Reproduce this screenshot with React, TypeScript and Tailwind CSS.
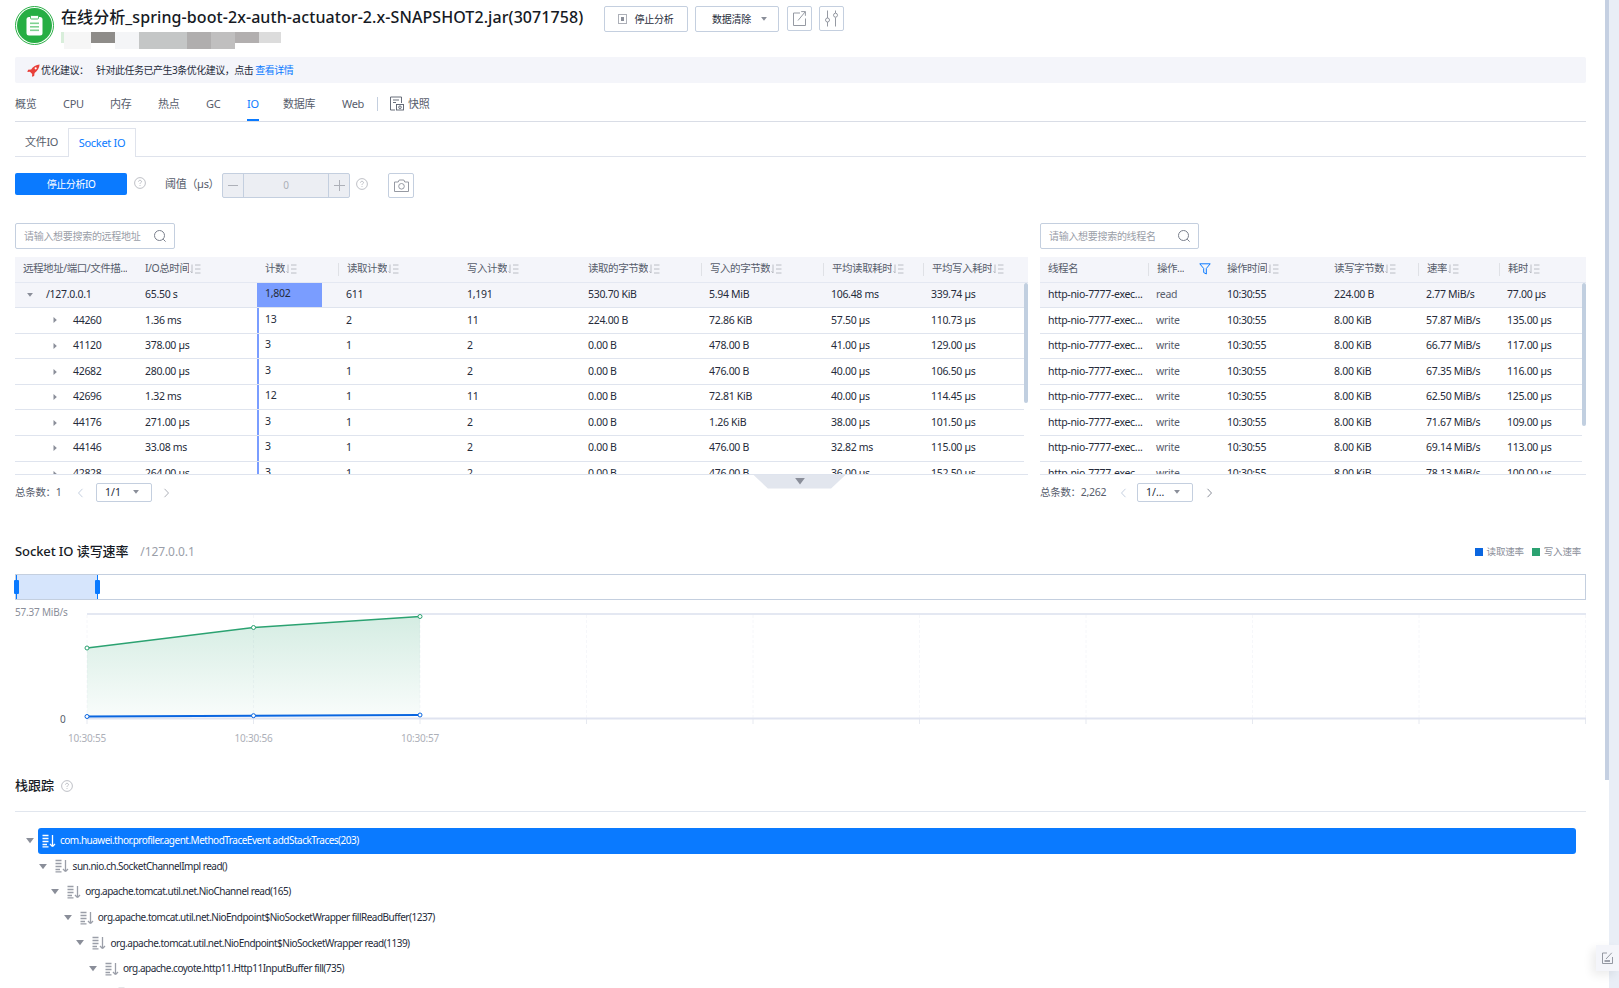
import React from "react";

const FONT = 'font-["Noto_Sans","Noto_Sans_CJK_SC",sans-serif]';

const Sort = () => (
  <svg width="11" height="10" viewBox="0 0 11 10" fill="none" stroke="#adb0b8" strokeWidth="0.8" className="ml-[1px] shrink-0">
    <path d="M2 0.5V9M2 9L0.5 7.2" />
    <path d="M5 1H10.5M5 5H10.5M5 9H10.5" />
  </svg>
);

const Help = ({ className = "" }: { className?: string }) => (
  <svg width="12" height="12" viewBox="0 0 12 12" fill="none" stroke="#adb0b8" strokeWidth="0.8" className={"shrink-0 " + className}>
    <circle cx="6" cy="6" r="5.4" />
    <path d="M4.5 4.7C4.5 3.8 5.2 3.3 6 3.3C6.8 3.3 7.5 3.8 7.5 4.6C7.5 5.5 6 5.7 6 6.9" />
    <path d="M6 8V8.9" />
  </svg>
);

const Search = () => (
  <svg width="14" height="14" viewBox="0 0 14 14" fill="none" stroke="#7a7f8c" strokeWidth="1" className="shrink-0">
    <circle cx="6.5" cy="6.5" r="5" />
    <path d="M10.2 10.2L12.6 12.6" />
  </svg>
);

const Chevron = ({ dir, color }: { dir: "l" | "r"; color: string }) => (
  <svg width="7" height="10" viewBox="0 0 7 10" fill="none" stroke={color} strokeWidth="1" className="shrink-0">
    <path d={dir === "l" ? "M5.5 0.8L1.5 5L5.5 9.2" : "M1.5 0.8L5.5 5L1.5 9.2"} />
  </svg>
);

const Caret = ({ color = "#8a8e99", size = 7 }: { color?: string; size?: number }) => (
  <svg width={size} height={size * 0.7} viewBox="0 0 7 5" className="shrink-0">
    <path d="M0 0H7L3.5 4.6Z" fill={color} />
  </svg>
);

const StackIcon = ({ color }: { color: string }) => (
  <svg width="14" height="14" viewBox="0 0 14 14" fill="none" stroke={color} strokeWidth="1.3" className="shrink-0">
    <path d="M0.5 1.5H6.5M0.5 4.5H6.5M0.5 7.5H6.5M0.5 10.5H5M0.5 12.8H6.5" />
    <path d="M10.5 1V12.6M10.5 12.6L8 10M10.5 12.6L13 10" />
  </svg>
);

const Logo = () => (
  <div className="flex h-[39px] w-[39px] shrink-0 items-center justify-center rounded-full border border-[#2aae46] bg-white">
    <div className="flex h-[35px] w-[35px] items-center justify-center rounded-full bg-[#27ae44]">
      <svg width="17" height="21" viewBox="0 0 17 21">
        <rect x="0.5" y="2" width="16" height="18.5" rx="2.5" fill="#fff" />
        <rect x="4.5" y="0.5" width="8" height="3.5" rx="1" fill="#fff" stroke="#27ae44" strokeWidth="0.8" />
        <rect x="4" y="7.5" width="9" height="1.6" fill="#7fd292" />
        <rect x="4" y="11" width="9" height="1.6" fill="#7fd292" />
        <rect x="4" y="14.5" width="9" height="1.6" fill="#7fd292" />
      </svg>
    </div>
  </div>
);

const leftCols = [122, 120, 81, 121, 121, 121, 122, 100, 105];
const leftHead = ["远程地址/端口/文件描...", "I/O总时间", "计数", "读取计数", "写入计数", "读取的字节数", "写入的字节数", "平均读取耗时", "平均写入耗时"];
const leftDiv = [false, false, false, true, false, false, true, true, true];
const leftRows: { a: string; w: number; cells: string[] }[] = [
  { a: "/127.0.0.1", w: 65, cells: ["65.50 s", "1,802", "611", "1,191", "530.70 KiB", "5.94 MiB", "106.48 ms", "339.74 µs"] },
  { a: "44260", w: 2, cells: ["1.36 ms", "13", "2", "11", "224.00 B", "72.86 KiB", "57.50 µs", "110.73 µs"] },
  { a: "41120", w: 2, cells: ["378.00 µs", "3", "1", "2", "0.00 B", "478.00 B", "41.00 µs", "129.00 µs"] },
  { a: "42682", w: 2, cells: ["280.00 µs", "3", "1", "2", "0.00 B", "476.00 B", "40.00 µs", "106.50 µs"] },
  { a: "42696", w: 2, cells: ["1.32 ms", "12", "1", "11", "0.00 B", "72.81 KiB", "40.00 µs", "114.45 µs"] },
  { a: "44176", w: 2, cells: ["271.00 µs", "3", "1", "2", "0.00 B", "1.26 KiB", "38.00 µs", "101.50 µs"] },
  { a: "44146", w: 2, cells: ["33.08 ms", "3", "1", "2", "0.00 B", "476.00 B", "32.82 ms", "115.00 µs"] },
  { a: "42828", w: 2, cells: ["264.00 µs", "3", "1", "2", "0.00 B", "476.00 B", "36.00 µs", "152.50 µs"] },
];

const rightCols = [108, 71, 107, 92, 81, 87];
const rightHead = ["线程名", "操作...", "操作时间", "读写字节数", "速率", "耗时"];
const rightDiv = [false, true, false, false, true, true];
const rightRows = [
  ["read", "10:30:55", "224.00 B", "2.77 MiB/s", "77.00 µs"],
  ["write", "10:30:55", "8.00 KiB", "57.87 MiB/s", "135.00 µs"],
  ["write", "10:30:55", "8.00 KiB", "66.77 MiB/s", "117.00 µs"],
  ["write", "10:30:55", "8.00 KiB", "67.35 MiB/s", "116.00 µs"],
  ["write", "10:30:55", "8.00 KiB", "62.50 MiB/s", "125.00 µs"],
  ["write", "10:30:55", "8.00 KiB", "71.67 MiB/s", "109.00 µs"],
  ["write", "10:30:55", "8.00 KiB", "69.14 MiB/s", "113.00 µs"],
  ["write", "10:30:55", "8.00 KiB", "78.13 MiB/s", "100.00 µs"],
];

const SearchBox = ({ ph, w }: { ph: string; w: string }) => (
  <div className={"flex h-[26px] items-center justify-between rounded-[2px] border border-[#c4cfdf] pl-[8px] pr-[7px] " + w}>
    <span className="text-[10px] tracking-[-0.3px] text-[#9a9ea8]">{ph}</span>
    <Search />
  </div>
);

const HeadCell = ({ w, text, sort, divider, filter }: { w: number; text: string; sort?: boolean; divider?: boolean; filter?: boolean }) => (
  <div className="relative flex h-full shrink-0 items-center pl-[8px] text-[10.5px] tracking-[-0.45px] text-[#575d6c]" style={{ width: w }}>
    {divider && <span className="mr-[8px] -ml-[8px] h-[13px] w-px bg-[#dfe1e6]" />}
    <span className="truncate">{text}</span>
    {sort && <Sort />}
    {filter && (
      <svg width="12" height="12" viewBox="0 0 12 12" fill="none" stroke="#0a7aff" strokeWidth="1" className="ml-auto mr-[8px]">
        <path d="M0.8 0.8H11.2L7.3 5.5V11L4.7 9.5V5.5Z" />
      </svg>
    )}
  </div>
);

const StackRow = ({ depth, text, active }: { depth: number; text: string; active?: boolean }) => (
  <div className="flex h-[25.6px] shrink-0 items-center" style={{ paddingLeft: 11 + depth * 12.6 }}>
    <Caret size={8} color="#8a8e99" />
    <div className={"ml-[4px] mr-[10px] flex h-full flex-1 items-center pl-[4px] " + (active ? "rounded-[3px] bg-[#0a7aff] text-white" : "text-[#252b3a]")} >
      <StackIcon color={active ? "#ffffff" : "#9a9ea8"} />
      <span className="ml-[4px] text-[10px] tracking-[-0.5px]">{text}</span>
    </div>
  </div>
);

const gridX = [87, 253.5, 420, 586.5, 753, 919.5, 1086, 1252.5, 1419, 1585.5];

export default function App() {
  return (
    <div className={"relative flex h-[988px] w-[1619px] overflow-hidden bg-white " + FONT}>
      <main className="flex w-[1605px] shrink-0 flex-col pl-[15px] pr-[19px]">
        {/* Title */}
        <header className="flex h-[57px] shrink-0 pt-[6px]">
          <Logo />
          <div className="ml-[7px] flex w-[543px] shrink-0 flex-col">
            <h1 className="text-[16px] leading-[22px] font-medium tracking-[0.08px] text-[#161a24] whitespace-nowrap">在线分析_spring-boot-2x-auth-actuator-2.x-SNAPSHOT2.jar(3071758)</h1>
            <div className="mt-[4px] flex h-[17px] w-[222px]">
              <div className="h-[11px] w-[3px] bg-[#d8eeda]" />
              <div className="h-[17px] w-[27px] bg-[#f6f6f6]" />
              <div className="h-[11px] w-[24px] bg-[#8e8c89]" />
              <div className="h-[17px] w-[24px] bg-[#f4f5f7]" />
              <div className="h-[17px] w-[48px] bg-[#c4c6c6]" />
              <div className="h-[17px] w-[24px] bg-[#b0aeae]" />
              <div className="h-[17px] w-[24px] bg-[#c0bfbf]" />
              <div className="h-[11px] w-[24px] bg-[#b2afaf]" />
              <div className="h-[11px] w-[22px] bg-[#dcdcdc]" />
            </div>
          </div>
          <button className="flex h-[26px] w-[84px] items-center justify-center rounded-[2px] border border-[#c4cfdf] text-[10px] tracking-[-0.2px] text-[#252b3a]">
            <span className="mr-[7px] flex h-[10px] w-[9px] items-center justify-center border border-[#adb0b8]"><span className="h-[4px] w-[3px] bg-[#8a8e99]" /></span>
            停止分析
          </button>
          <button className="ml-[7px] flex h-[26px] w-[84px] items-center justify-center rounded-[2px] border border-[#c4cfdf] pl-[5px] text-[10px] tracking-[-0.2px] text-[#252b3a]">
            数据清除
            <span className="ml-[10px]"><Caret size={6} /></span>
          </button>
          <button className="ml-[8px] flex h-[25px] w-[25px] items-center justify-center rounded-[2px] border border-[#c4cfdf]">
            <svg width="13" height="15" viewBox="0 0 13 15" fill="none" stroke="#8a8e99" strokeWidth="0.9">
              <path d="M7 2H0.5V14.5H12.5V7.5" />
              <path d="M5 9.5L12.2 0.8M8.2 0.6H12.4V4.8" />
            </svg>
          </button>
          <button className="ml-[7px] flex h-[25px] w-[25px] items-center justify-center rounded-[2px] border border-[#c4cfdf]">
            <svg width="15" height="17" viewBox="0 0 15 17" fill="none" stroke="#8a8e99" strokeWidth="0.9">
              <path d="M3.5 0.5V8M3.5 12V16.5M11.5 0.5V3M11.5 7.5V16.5" />
              <circle cx="3.5" cy="10" r="2" />
              <circle cx="11.5" cy="5.2" r="2" />
            </svg>
          </button>
        </header>

        {/* Advice banner */}
        <div className="flex h-[26px] shrink-0 items-center rounded-[2px] bg-[#f4f5fa] pl-[12px] text-[10px] tracking-[-0.5px] text-[#252b3a]">
          <svg width="13" height="13" viewBox="0 0 12 12" className="shrink-0">
            <path d="M11.6 0.4C8.5 0.6 5.5 2.3 3.8 5L1 5.4L0.3 7.4L2.7 7.2L4.8 9.3L4.6 11.7L6.6 11L7 8.2C9.7 6.5 11.4 3.5 11.6 0.4Z" fill="#e8403a" />
            <circle cx="8" cy="4" r="1" fill="#ffffff" />
          </svg>
          <span className="ml-[1px] w-[55px]">优化建议：</span>
          <span>针对此任务已产生3条优化建议，点击</span>
          <span className="ml-[2px] text-[#0a7aff]">查看详情</span>
        </div>

        {/* Top tabs */}
        <nav className="mt-[10px] flex h-[29px] shrink-0 items-start border-b-[1.5px] border-[#d9dde6] text-[11px] text-[#575d6c]">
          {[
            ["概览", 48],
            ["CPU", 47],
            ["内存", 48],
            ["热点", 48],
            ["GC", 41],
            ["IO", 36],
            ["数据库", 59],
            ["Web", 35],
          ].map(([t, w]) => (
            <div key={t as string} className="h-[28px] leading-[22px]" style={{ width: w as number }}>
              <span className={"inline-block h-[28px] tracking-[-0.3px] " + (t === "IO" ? "border-b-[2px] border-[#0a7aff] text-[#0a7aff]" : "")}>{t}</span>
            </div>
          ))}
          <span className="mt-[4px] h-[14px] w-px bg-[#c4cfdf]" />
          <span className="ml-[12px] mt-[3px]">
            <svg width="14" height="15" viewBox="0 0 14 15" fill="none" stroke="#575d6c" strokeWidth="0.9">
              <path d="M11.5 7V1H0.5V14H5" />
              <path d="M3 4H9M3 6.5H6" />
              <rect x="6.5" y="8.5" width="7" height="5.5" />
              <circle cx="10" cy="11.2" r="1.3" />
            </svg>
          </span>
          <span className="ml-[4px] leading-[22px] tracking-[-0.3px]">快照</span>
        </nav>

        {/* Sub tabs */}
        <div className="mt-[6px] flex h-[29px] shrink-0 items-center border-b border-[#dfe3ec] text-[11px] tracking-[-0.3px]">
          <span className="ml-[10px] w-[43px] text-[#575d6c]">文件IO</span>
          <span className="relative -mb-px flex h-[29px] w-[68px] items-center justify-center border border-b-0 border-[#dfe3ec] bg-white text-[#0a7aff]">Socket IO</span>
        </div>

        {/* Toolbar */}
        <div className="mt-[16px] flex h-[25px] shrink-0 items-start text-[11px] text-[#575d6c]">
          <button className="flex h-[22px] w-[112px] items-center justify-center rounded-[2px] bg-[#0a7aff] text-[10px] tracking-[-0.45px] text-white">停止分析IO</button>
          <Help className="ml-[7px] mt-[4px]" />
          <span className="ml-[19px] mt-[3px] w-[57px] tracking-[-0.3px]">阈值（µs）</span>
          <div className="flex h-[25px] w-[128px] items-stretch rounded-[2px] border border-[#c4cfdf] bg-[#eceef3]">
            <span className="flex w-[21px] items-center justify-center border-r border-[#c4cfdf]"><span className="h-px w-[10px] bg-[#adb0b8]" /></span>
            <span className="flex flex-1 items-center justify-center text-[10px] text-[#adb0b8]">0</span>
            <span className="relative flex w-[21px] items-center justify-center border-l border-[#c4cfdf]">
              <svg width="11" height="11" viewBox="0 0 11 11" stroke="#adb0b8" strokeWidth="1"><path d="M5.5 0V11M0 5.5H11" /></svg>
            </span>
          </div>
          <Help className="ml-[6px] mt-[5px]" />
          <button className="ml-[20px] flex h-[25px] w-[26px] items-center justify-center rounded-[2px] border border-[#c4cfdf]">
            <svg width="15" height="13" viewBox="0 0 15 13" fill="none" stroke="#8a8e99" strokeWidth="0.9">
              <path d="M0.5 3H4.2L5.2 1H9.8L10.8 3H14.5V12.5H0.5Z" />
              <circle cx="7.5" cy="7.3" r="2.8" />
            </svg>
          </button>
        </div>

        {/* Tables */}
        <div className="mt-[25px] flex h-[280px] shrink-0 gap-[12px]">
          <section className="relative w-[1013px] shrink-0">
            <SearchBox ph="请输入想要搜索的远程地址" w="w-[160px]" />
            <div className="mt-[8px] flex h-[25.5px] items-center border-b border-[#e4e8f2] bg-[#f4f5fa]">
              {leftHead.map((h, i) => (
                <HeadCell key={h} w={leftCols[i]} text={h} sort={i > 0} divider={leftDiv[i]} />
              ))}
            </div>
            <div className="h-[192px] overflow-hidden border-b border-[#dfe4ee]">
              <div className="relative">
                <div className="absolute right-0 top-0 z-10 h-[120px] w-[4px] rounded-[2px] bg-[#c1cfe0]" />
                {leftRows.map((r, ri) => (
                  <div key={r.a} className={"mr-[4px] flex h-[25.6px] items-center border-b border-[#dfe4ee] text-[10.5px] tracking-[-0.3px] text-[#252b3a] " + (ri === 0 ? "-mr-0 bg-[#f4f5fa]" : "")}>
                    <div className="flex h-full shrink-0 items-center" style={{ width: leftCols[0], paddingLeft: ri === 0 ? 12 : 38 }}>
                      {ri === 0 ? (
                        <span className="mr-[13px]"><Caret size={6} /></span>
                      ) : (
                        <svg width="4" height="6" viewBox="0 0 4 6" className="mr-[16px] shrink-0"><path d="M0.5 0L3.8 3L0.5 6Z" fill="#8a8e99" /></svg>
                      )}
                      <span>{r.a}</span>
                    </div>
                    {r.cells.map((c, ci) => (
                      <div key={ci} className="relative flex h-full shrink-0 items-center pl-[8px]" style={{ width: leftCols[ci + 1] }}>
                        {ci === 1 && <span className={"absolute inset-y-0 left-0 bg-[#7a9dff]"} style={{ width: r.w }} />}
                        <span className={"relative " + (ci === 1 ? "-top-[1px]" : "")}>{c}</span>
                      </div>
                    ))}
                  </div>
                ))}
              </div>
            </div>
            <div className="relative mt-[9px] flex h-[18px] items-center text-[10.5px] text-[#575d6c]">
              <span className="w-[62px] tracking-[-0.3px]">总条数：1</span>
              <Chevron dir="l" color="#c4cfdf" />
              <div className="ml-[12px] flex h-[19px] w-[56px] items-center rounded-[2px] border border-[#c4cfdf] pl-[8px] text-[#252b3a]">
                1/1
                <span className="ml-[12px]"><Caret size={6} /></span>
              </div>
              <span className="ml-[11px]"><Chevron dir="r" color="#adb0b8" /></span>
              <div className="absolute -top-[9px] left-[738px] flex h-[14px] w-[93px] justify-center bg-[#e2e6ee] pt-[3px] [clip-path:polygon(0_0,100%_0,84%_100%,16%_100%)]">
                <Caret size={10} color="#8a8e99" />
              </div>
            </div>
          </section>

          <section className="w-[546px] shrink-0">
            <SearchBox ph="请输入想要搜索的线程名" w="w-[159px]" />
            <div className="mt-[8px] flex h-[25.5px] items-center border-b border-[#e4e8f2] bg-[#f4f5fa]">
              {rightHead.map((h, i) => (
                <HeadCell key={h} w={rightCols[i]} text={h} sort={i > 1} divider={rightDiv[i]} filter={i === 1} />
              ))}
            </div>
            <div className="h-[192px] overflow-hidden border-b border-[#dfe4ee]">
              <div className="relative">
                <div className="absolute right-0 top-0 z-10 h-[143px] w-[4px] rounded-[2px] bg-[#c1cfe0]" />
                {rightRows.map((r, ri) => (
                  <div key={ri} className={"mr-[4px] flex h-[25.6px] items-center border-b border-[#dfe4ee] text-[10.5px] tracking-[-0.3px] text-[#252b3a] " + (ri === 0 ? "-mr-0 bg-[#f4f5fa]" : "")}>
                    <div className="shrink-0 truncate pl-[8px]" style={{ width: rightCols[0] }}>http-nio-7777-exec...</div>
                    {r.map((c, ci) => (
                      <div key={ci} className={"shrink-0 pl-[8px] " + (ci === 0 ? "text-[#575d6c]" : "")} style={{ width: rightCols[ci + 1] }}>{c}</div>
                    ))}
                  </div>
                ))}
              </div>
            </div>
            <div className="mt-[9px] flex h-[18px] items-center text-[10.5px] text-[#575d6c]">
              <span className="w-[80px] tracking-[-0.3px]">总条数：2,262</span>
              <Chevron dir="l" color="#c4cfdf" />
              <div className="ml-[10px] flex h-[19px] w-[56px] items-center rounded-[2px] border border-[#c4cfdf] pl-[8px] text-[#252b3a]">
                1/...
                <span className="ml-[10px]"><Caret size={6} /></span>
              </div>
              <span className="ml-[13px]"><Chevron dir="r" color="#8a8e99" /></span>
            </div>
          </section>
        </div>

        {/* Chart */}
        <div className="mt-[38px] flex h-[22px] shrink-0 items-center">
          <h2 className="text-[13px] font-medium tracking-[-0.1px] text-[#161a24]">Socket IO 读写速率</h2>
          <span className="ml-[12px] text-[12px] tracking-[-0.1px] text-[#9a9ea8]">/127.0.0.1</span>
          <div className="ml-auto mr-[5px] flex items-center text-[9.5px] tracking-[-0.2px] text-[#8a8e99]">
            <span className="mr-[4px] h-[8px] w-[8px] bg-[#0a66e0]" />读取速率
            <span className="ml-[8px] mr-[4px] h-[8px] w-[8px] bg-[#2ba271]" />写入速率
          </div>
        </div>
        <div className="relative mt-[11px] h-[26px] shrink-0 border border-[#c4cfdf]">
          <div className="absolute inset-y-0 left-0 w-[82px] border-x border-[#0a7aff] bg-[#d6e5fc]" />
          <div className="absolute left-[-2px] top-[5px] h-[14px] w-[5px] rounded-[1px] bg-[#0a7aff]" />
          <div className="absolute left-[79px] top-[5px] h-[14px] w-[5px] rounded-[1px] bg-[#0a7aff]" />
        </div>
        <svg width="1571" height="148" viewBox="0 0 1571 148" className="mt-[5px] shrink-0" fontFamily="'Noto Sans','Noto Sans CJK SC',sans-serif">
          <defs>
            <linearGradient id="area" x1="0" y1="0" x2="0" y2="1">
              <stop offset="0" stopColor="#2ba271" stopOpacity="0.2" />
              <stop offset="1" stopColor="#2ba271" stopOpacity="0.03" />
            </linearGradient>
          </defs>
          {gridX.map((x) => (
            <path key={x} d={`M${x - 15} 10V113`} stroke="#f6f7fa" strokeDasharray="3 2" strokeWidth="1" />
          ))}
          {gridX.map((x) => (
            <path key={"t" + x} d={`M${x - 15} 113V119`} stroke="#e6e9f0" strokeWidth="1" />
          ))}
          <path d="M72 9H1571" stroke="#e4e8f2" strokeWidth="2" />
          <path d="M72 113.5H1571" stroke="#dfe3f0" strokeWidth="2" />
          <path d="M72 43L238.5 22.5L405 11.5V111H72Z" fill="url(#area)" />
          <path d="M72 43L238.5 22.5L405 11.5" fill="none" stroke="#2ba271" strokeWidth="1.5" />
          <path d="M72 111.5L238.5 110.7L405 110" fill="none" stroke="#0a66e0" strokeWidth="2" />
          {[
            [72, 43],
            [238.5, 22.5],
            [405, 11.5],
          ].map(([x, y]) => (
            <circle key={x} cx={x} cy={y} r="2" fill="#fff" stroke="#2ba271" strokeWidth="1" />
          ))}
          {[
            [72, 111.5],
            [238.5, 110.7],
            [405, 110],
          ].map(([x, y]) => (
            <circle key={x} cx={x} cy={y} r="2" fill="#fff" stroke="#0a66e0" strokeWidth="1" />
          ))}
          <text x="0" y="11" fontSize="10" fill="#8a8e99" letterSpacing="-0.2">57.37 MiB/s</text>
          <text x="45" y="118" fontSize="10" fill="#575d6c">0</text>
          {["10:30:55", "10:30:56", "10:30:57"].map((t, i) => (
            <text key={t} x={72 + i * 166.5} y="137" fontSize="10" textAnchor="middle" fill="#adb0b8" letterSpacing="-0.2">{t}</text>
          ))}
        </svg>

        {/* Stack */}
        <div className="mt-[23px] flex h-[20px] shrink-0 items-center">
          <h2 className="text-[13px] font-medium text-[#161a24]">栈跟踪</h2>
          <Help className="ml-[7px]" />
        </div>
        <div className="mt-[15px] h-px shrink-0 bg-[#e1e6ee]" />
        <div className="mt-[16px] flex shrink-0 flex-col">
          <StackRow depth={0} active text="com.huawei.thor.profiler.agent.MethodTraceEvent addStackTraces(203)" />
          <StackRow depth={1} text="sun.nio.ch.SocketChannelImpl read()" />
          <StackRow depth={2} text="org.apache.tomcat.util.net.NioChannel read(165)" />
          <StackRow depth={3} text="org.apache.tomcat.util.net.NioEndpoint$NioSocketWrapper fillReadBuffer(1237)" />
          <StackRow depth={4} text="org.apache.tomcat.util.net.NioEndpoint$NioSocketWrapper read(1139)" />
          <StackRow depth={5} text="org.apache.coyote.http11.Http11InputBuffer fill(735)" />
          <StackRow depth={6} text="" />
        </div>
      </main>

      {/* Page scrollbar */}
      <aside className="flex h-full w-[14px] shrink-0">
        <div className="h-[780px] w-[4px] bg-[#c5d0e2]" />
        <div className="h-full w-[10px] bg-[#e9eef6]" />
      </aside>

      {/* Feedback button */}
      <button className="absolute left-[1596px] top-[945px] flex h-[26px] w-[23px] items-center justify-center bg-[#f4f5fa] shadow-[-4px_4px_10px_rgba(0,0,0,0.08)]">
        <svg width="11" height="12" viewBox="0 0 11 12" fill="none" stroke="#8a8e99" strokeWidth="0.9">
          <path d="M5 1H0.5V11.5H10.5V5" />
          <path d="M4 7L9.8 0.8" />
          <path d="M2.5 9H8" strokeWidth="1.6" />
        </svg>
      </button>
    </div>
  );
}
